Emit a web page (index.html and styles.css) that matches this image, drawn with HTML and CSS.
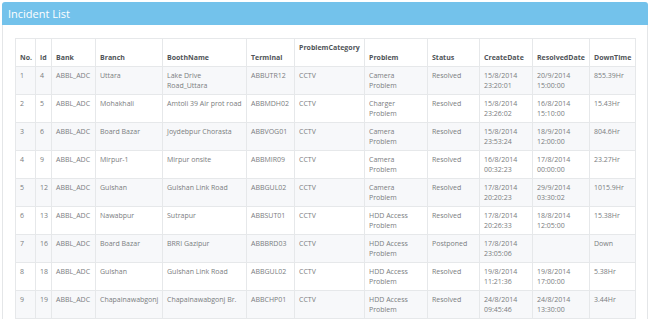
FILE: index.html
```html
<!DOCTYPE html>
<html>
<head>
<meta charset="utf-8">
<link rel="stylesheet" href="styles.css">
</head>
<body>
<div class="panel">
  <div class="panel-heading">Incident List</div>
  <div class="panel-body">
    <table class="grid">
      <colgroup>
        <col class="c-no"><col class="c-id"><col class="c-bank"><col class="c-branch"><col class="c-booth"><col class="c-term"><col class="c-cat"><col class="c-prob"><col class="c-status"><col class="c-create"><col class="c-resolved"><col class="c-down">
      </colgroup>
      <thead>
        <tr>
          <th>No.</th><th>id</th><th>Bank</th><th>Branch</th><th>BoothName</th><th>Terminal</th><th class="top">ProblemCategory</th><th>Problem</th><th>Status</th><th>CreateDate</th><th>ResolvedDate</th><th>DownTime</th>
        </tr>
      </thead>
      <tbody>
        <tr><td>1</td><td>4</td><td>ABBL_ADC</td><td>Uttara</td><td>Lake Drive Road_Uttara</td><td>ABBUTR12</td><td>CCTV</td><td>Camera Problem</td><td>Resolved</td><td>15/8/2014 23:20:01</td><td>20/9/2014 15:00:00</td><td>855.39Hr</td></tr>
        <tr><td>2</td><td>5</td><td>ABBL_ADC</td><td>Mohakhali</td><td>Amtoli 39 Air prot road</td><td>ABBMDH02</td><td>CCTV</td><td>Charger Problem</td><td>Resolved</td><td>15/8/2014 23:26:02</td><td>16/8/2014 15:10:00</td><td>15.43Hr</td></tr>
        <tr><td>3</td><td>6</td><td>ABBL_ADC</td><td>Board Bazar</td><td>Joydebpur Chorasta</td><td>ABBVOG01</td><td>CCTV</td><td>Camera Problem</td><td>Resolved</td><td>15/8/2014 23:53:24</td><td>18/9/2014 12:00:00</td><td>804.6Hr</td></tr>
        <tr><td>4</td><td>9</td><td>ABBL_ADC</td><td>Mirpur-1</td><td>Mirpur onsite</td><td>ABBMIR09</td><td>CCTV</td><td>Camera Problem</td><td>Resolved</td><td>16/8/2014 00:32:23</td><td>17/8/2014 00:00:00</td><td>23.27Hr</td></tr>
        <tr><td>5</td><td>12</td><td>ABBL_ADC</td><td>Gulshan</td><td>Gulshan Link Road</td><td>ABBGUL02</td><td>CCTV</td><td>Camera Problem</td><td>Resolved</td><td>17/8/2014 20:20:23</td><td>29/9/2014 03:30:02</td><td>1015.9Hr</td></tr>
        <tr><td>6</td><td>13</td><td>ABBL_ADC</td><td>Nawabpur</td><td>Sutrapur</td><td>ABBSUT01</td><td>CCTV</td><td>HDD Access Problem</td><td>Resolved</td><td>17/8/2014 20:26:33</td><td>18/8/2014 12:05:00</td><td>15.38Hr</td></tr>
        <tr><td>7</td><td>16</td><td>ABBL_ADC</td><td>Board Bazar</td><td>BRRI Gazipur</td><td>ABBBRD03</td><td>CCTV</td><td>HDD Access Problem</td><td>Postponed</td><td>17/8/2014 23:05:06</td><td></td><td>Down</td></tr>
        <tr><td>8</td><td>18</td><td>ABBL_ADC</td><td>Gulshan</td><td>Gulshan Link Road</td><td>ABBGUL02</td><td>CCTV</td><td>HDD Access Problem</td><td>Resolved</td><td>19/8/2014 11:21:36</td><td>19/8/2014 17:00:00</td><td>5.38Hr</td></tr>
        <tr><td>9</td><td>19</td><td>ABBL_ADC</td><td>Chapainawabgonj</td><td>Chapainawabgonj Br.</td><td>ABBCHP01</td><td>CCTV</td><td>HDD Access Problem</td><td>Resolved</td><td>24/8/2014 09:45:46</td><td>24/8/2014 13:30:00</td><td>3.44Hr</td></tr>
      </tbody>
    </table>
  </div>
</div>
</body>
</html>
```
FILE: styles.css
```css
html, body {
  margin: 0;
  padding: 0;
  background: #ffffff;
  font-family: "Open Sans", "DejaVu Sans", sans-serif;
}

.panel {
  margin: 2px 2px 0 2px;
  width: 646px;
}

.panel-heading {
  background: #73c2eb;
  color: #ffffff;
  font-size: 11px;
  line-height: 23px;
  height: 23px;
  padding-left: 6px;
  border-radius: 3px 3px 0 0;
}

.panel-body {
  border-left: 1px solid #e4e6e8;
  border-right: 1px solid #e4e6e8;
  padding: 13px 10px 0 12px;
}

.grid {
  width: 620px;
  table-layout: fixed;
  border-collapse: collapse;
  font-size: 7px;
  line-height: 10px;
}

.c-no { width: 20px; }
.c-id { width: 16px; }
.c-bank { width: 44px; }
.c-branch { width: 67px; }
.c-booth { width: 84px; }
.c-term { width: 48px; }
.c-cat { width: 70px; }
.c-prob { width: 63px; }
.c-status { width: 52px; }
.c-create { width: 53px; }
.c-resolved { width: 57px; }
.c-down { width: 46px; }

.grid th,
.grid td {
  border: 1px solid #e6e8ea;
  padding: 4px 4px 3px 4px;
  text-align: left;
  white-space: normal;
  overflow: hidden;
}

.grid th {
  height: 20px;
  vertical-align: bottom;
  font-weight: 700;
  color: #505458;
}

.grid th.top {
  vertical-align: top;
}

.grid td {
  height: 20px;
  vertical-align: top;
  color: #7a7d80;
}

.grid tbody tr:nth-child(odd) td {
  background: #f7f8fa;
}
```
